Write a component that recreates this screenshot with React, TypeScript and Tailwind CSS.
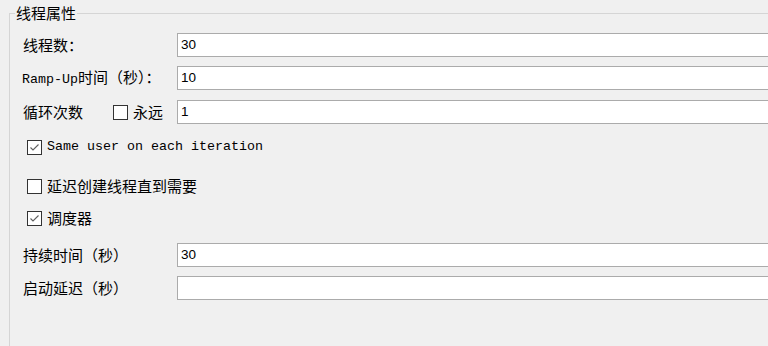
import React from "react";

const cjk = { fontFamily: '"Noto Sans CJK SC", "Noto Sans", sans-serif' };
const mono = { fontFamily: '"Liberation Mono", "Noto Sans CJK SC", monospace' };

function Check({ checked }: { checked?: boolean }) {
  return (
    <span className="flex h-[15px] w-[15px] shrink-0 items-center justify-center border border-[#333333] bg-white">
      {checked && (
        <svg width="13" height="13" viewBox="0 0 13 13">
          <path d="M2.5 6.5 L5 9 L10.5 3.5" fill="none" stroke="#606060" strokeWidth="1.1" />
        </svg>
      )}
    </span>
  );
}

function Field({ value }: { value?: string }) {
  return (
    <div
      className="flex h-[24px] flex-1 items-center border border-[#ababab] bg-white pl-[3px] text-[13.5px] text-black"
      style={{ fontFamily: '"Liberation Sans", Arial, sans-serif' }}
    >
      {value}
    </div>
  );
}

export default function App() {
  return (
    <div className="h-[346px] w-[768px] overflow-hidden bg-[#f0f0f0] text-black">
      <fieldset className="ml-[9px] h-[400px] w-[1000px] border border-[#d5d5d5]">
        <legend className="ml-[5px] px-[1px] text-[15px] leading-[26px]" style={cjk}>
          线程属性
        </legend>
        <div className="flex flex-col text-[15px]" style={cjk}>
          <div className="mt-[7px] flex h-[24px] items-center">
            <div className="w-[167px] pl-[13px]">线程数：</div>
            <Field value="30" />
          </div>
          <div className="mt-[9px] flex h-[24px] items-center">
            <div className="w-[167px] pl-[12px]">
              <span className="text-[13.33px]" style={mono}>Ramp-Up</span>
              <span>时间（秒）：</span>
            </div>
            <Field value="10" />
          </div>
          <div className="mt-[10px] flex h-[24px] items-center">
            <div className="flex w-[167px] items-center pl-[13px]">
              <span className="w-[90px]">循环次数</span>
              <Check />
              <span className="ml-[5px]">永远</span>
            </div>
            <Field value="1" />
          </div>
          <div className="mt-[11px] flex h-[24px] items-center pl-[17px]">
            <Check checked />
            <span className="ml-[5px] text-[13.33px]" style={mono}>
              Same user on each iteration
            </span>
          </div>
          <div className="mt-[15px] flex h-[24px] items-center pl-[17px]">
            <Check />
            <span className="ml-[5px]">延迟创建线程直到需要</span>
          </div>
          <div className="mt-[8px] flex h-[24px] items-center pl-[17px]">
            <Check checked />
            <span className="ml-[5px]">调度器</span>
          </div>
          <div className="mt-[13px] flex h-[24px] items-center">
            <div className="w-[167px] pl-[13px]">持续时间（秒）</div>
            <Field value="30" />
          </div>
          <div className="mt-[9px] flex h-[24px] items-center">
            <div className="w-[167px] pl-[13px]">启动延迟（秒）</div>
            <Field />
          </div>
        </div>
      </fieldset>
    </div>
  );
}
